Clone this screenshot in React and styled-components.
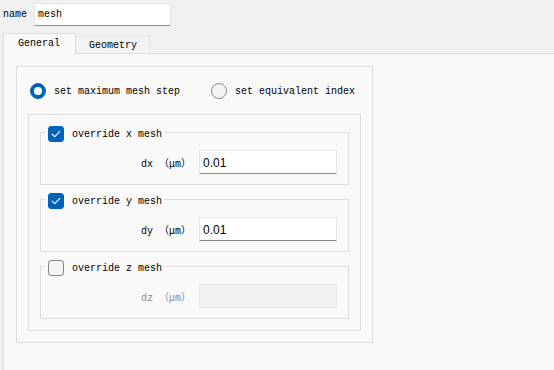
import styled, { createGlobalStyle } from 'styled-components';

const Global = createGlobalStyle`
  html, body {
    margin: 0;
    background: #f0f0f0;
  }
  body {
    width: 554px;
    height: 370px;
    overflow: hidden;
    font-family: "Liberation Mono", "Noto Sans CJK SC", monospace;
    font-size: 10px;
    color: #000;
  }
`;

const Page = styled.div`
  display: flex;
  flex-direction: column;
  height: 370px;
`;

const NameRow = styled.div`
  display: flex;
  align-items: center;
  gap: 7px;
  padding: 3px 0 0 3px;
`;

const NameInput = styled.div`
  box-sizing: border-box;
  width: 137px;
  height: 23px;
  padding-left: 3px;
  display: flex;
  align-items: center;
  background: #fff;
  border: 1px solid #e6e6e6;
  border-bottom-color: #8a8a8a;
`;

const TabBar = styled.div`
  display: flex;
  align-items: flex-end;
  margin-top: 7px;
  padding-left: 3px;
`;

const Tab = styled.div`
  box-sizing: border-box;
  display: flex;
  align-items: center;
  height: ${(p) => (p.$active ? '21px' : '17px')};
  padding: ${(p) => (p.$active ? '0 15px 1px 14px' : '0 12px 0 13px')};
  margin-bottom: ${(p) => (p.$active ? '-1px' : '0')};
  background: ${(p) => (p.$active ? '#f9f9f9' : '#f3f3f3')};
  border: 1px solid ${(p) => (p.$active ? '#dcdcdc' : '#e3e3e3')};
  border-bottom: none;
  border-left: ${(p) => (p.$active ? '1px solid #dcdcdc' : 'none')};
  position: relative;
  z-index: ${(p) => (p.$active ? 1 : 0)};
`;

const Pane = styled.div`
  flex: 1;
  margin-left: 3px;
  padding: 12px 0 0 12px;
  background: #f9f9f9;
  border-top: 1px solid #dcdcdc;
  border-left: 1px solid #dcdcdc;
`;

const GroupBox = styled.div`
  box-sizing: border-box;
  width: ${(p) => p.$width}px;
  border: 1px solid #dcdcdc;
  padding: ${(p) => p.$pad};
`;

const RadioRow = styled.div`
  display: flex;
  align-items: center;
  height: 16px;
  padding-left: 2px;
  margin-bottom: 15px;
`;

const RadioOption = styled.label`
  display: flex;
  align-items: center;
  gap: 8px;
  margin-right: ${(p) => p.$gap || 0}px;
`;

const RadioDot = styled.span`
  box-sizing: border-box;
  width: 16px;
  height: 16px;
  border-radius: 50%;
  display: flex;
  align-items: center;
  justify-content: center;
  background: ${(p) => (p.$on ? '#0062b9' : '#f3f3f3')};
  border: 1px solid ${(p) => (p.$on ? '#0062b9' : '#8a8a8a')};

  &::after {
    content: '';
    display: ${(p) => (p.$on ? 'block' : 'none')};
    width: 6px;
    height: 6px;
    border-radius: 50%;
    background: #fff;
    box-shadow: 0 0 0 1px #fff;
  }
`;

const Frame = styled.div`
  border: 1px solid #dcdcdc;
  margin-bottom: ${(p) => (p.$last ? 0 : 14)}px;
`;

const FrameTitle = styled.div`
  display: flex;
  align-items: center;
  gap: 8px;
  width: fit-content;
  height: 16px;
  margin: -7px 0 0 4px;
  padding: 0 2px 0 3px;
  background: #f9f9f9;
`;

const Check = styled.span`
  box-sizing: border-box;
  width: 16px;
  height: 16px;
  border-radius: 3px;
  display: flex;
  align-items: center;
  justify-content: center;
  background: ${(p) => (p.$on ? '#0062b9' : '#f4f4f4')};
  border: 1px solid ${(p) => (p.$on ? '#0062b9' : '#878787')};
`;

const FieldRow = styled.div`
  display: flex;
  justify-content: flex-end;
  align-items: center;
  gap: 8px;
  margin-top: 8px;
  padding: 0 11px 10px 0;
`;

const FieldLabel = styled.span`
  color: ${(p) => (p.$disabled ? '#8c8c8c' : '#000')};
`;

const ValueInput = styled.div`
  box-sizing: border-box;
  width: 138px;
  height: 24px;
  padding: 2px 0 0 3px;
  display: flex;
  align-items: center;
  font-family: "Liberation Sans", Arial, sans-serif;
  font-size: 12px;
  background: ${(p) => (p.$disabled ? '#f0f0f0' : '#fff')};
  border: 1px solid ${(p) => (p.$disabled ? '#e8e8e8' : '#e6e6e6')};
  border-bottom-color: ${(p) => (p.$disabled ? '#e8e8e8' : '#868686')};
`;

const Tick = () => (
  <svg width="10" height="8" viewBox="0 0 10 8">
    <path d="M1.2 4.2 L3.8 6.6 L8.8 1.4" fill="none" stroke="#fff" strokeWidth="1.2" strokeLinecap="round" strokeLinejoin="round" />
  </svg>
);

const axes = [
  { axis: 'x', on: true, value: '0.01' },
  { axis: 'y', on: true, value: '0.01' },
  { axis: 'z', on: false, value: '' },
];

function MeshFrame({ axis, on, value, last }) {
  return (
    <Frame $last={last}>
      <FrameTitle>
        <Check $on={on}>{on && <Tick />}</Check>
        <span>override {axis} mesh</span>
      </FrameTitle>
      <FieldRow>
        <FieldLabel $disabled={!on}>d{axis} （μm）</FieldLabel>
        <ValueInput $disabled={!on}>{value}</ValueInput>
      </FieldRow>
    </Frame>
  );
}

export default function App() {
  return (
    <Page>
      <Global />
      <NameRow>
        <span>name</span>
        <NameInput>mesh</NameInput>
      </NameRow>
      <TabBar>
        <Tab $active>General</Tab>
        <Tab>Geometry</Tab>
      </TabBar>
      <Pane>
        <GroupBox $width={357} $pad="16px 11px 11px 11px">
          <RadioRow>
            <RadioOption $gap={31}>
              <RadioDot $on />
              <span>set maximum mesh step</span>
            </RadioOption>
            <RadioOption>
              <RadioDot />
              <span>set equivalent index</span>
            </RadioOption>
          </RadioRow>
          <GroupBox $width={333} $pad="17px 11px 11px 11px">
            {axes.map((a, i) => (
              <MeshFrame key={a.axis} {...a} last={i === axes.length - 1} />
            ))}
          </GroupBox>
        </GroupBox>
      </Pane>
    </Page>
  );
}
